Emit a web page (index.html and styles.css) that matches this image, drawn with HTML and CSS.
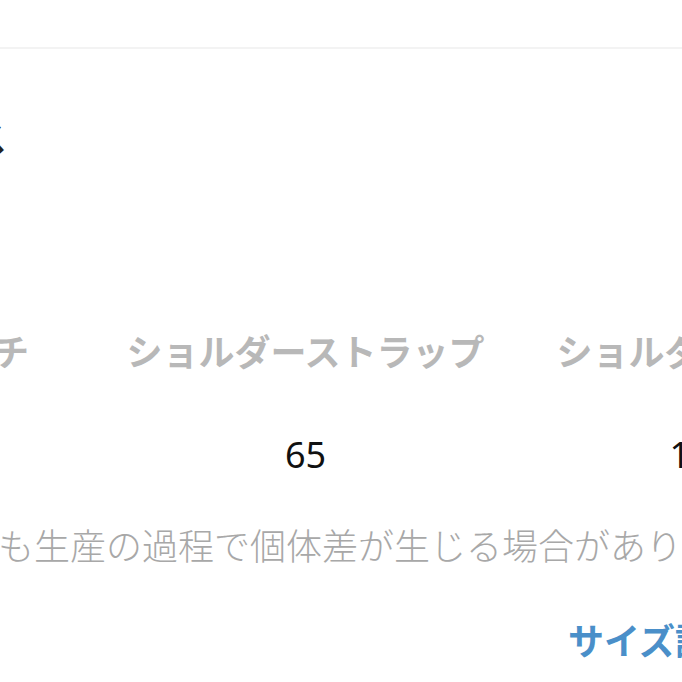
FILE: index.html
```html
<!DOCTYPE html>
<html lang="ja">
<head>
<meta charset="utf-8">
<link rel="stylesheet" href="styles.css">
</head>
<body>
<div class="topbar"></div>
<h2 class="title">サイズガイダンス</h2>
<div class="size-table">
  <div class="cell head">バッグ本体マチ</div>
  <div class="cell head">ショルダーストラップ</div>
  <div class="cell head">ショルダーの長さ</div>
  <div class="cell val">14</div>
  <div class="cell val">65</div>
  <div class="cell val">120</div>
</div>
<p class="note">※いずれも生産の過程で個体差が生じる場合があります。</p>
<div class="link-row"><a class="link">サイズ詳細を見る</a></div>
</body>
</html>
```

FILE: styles.css
```css
html, body {
  margin: 0;
  padding: 0;
  background: #ffffff;
}
body {
  width: 682px;
  height: 682px;
  overflow: hidden;
  font-family: "Noto Sans CJK JP", "Noto Sans", sans-serif;
}
.topbar {
  height: 47px;
  border-bottom: 2px solid #f3f3f3;
}
.title {
  margin: 60px 0 0 -278px;
  font-size: 36px;
  line-height: 54px;
  font-weight: 700;
  color: #222222;
  white-space: nowrap;
}
.size-table {
  margin: 134px 0 0 -302px;
  display: grid;
  grid-template-columns: 410px 395px 395px;
  grid-auto-rows: 105px;
  width: 1200px;
}
.cell {
  display: flex;
  align-items: center;
  justify-content: center;
  white-space: nowrap;
  font-size: 36px;
}
.head {
  font-weight: 700;
  color: #b8b8b8;
}
.val {
  font-family: "Noto Sans", "Noto Sans CJK JP", sans-serif;
  color: #111111;
}
.note {
  margin: 10px 0 0 -146px;
  font-size: 36px;
  line-height: 54px;
  font-weight: 300;
  color: #a8a8a8;
  white-space: nowrap;
}
.link-row {
  margin: 41px 0 0 568px;
  white-space: nowrap;
}
.link {
  font-size: 36px;
  line-height: 54px;
  font-weight: 700;
  color: #4a8fc9;
}
```
